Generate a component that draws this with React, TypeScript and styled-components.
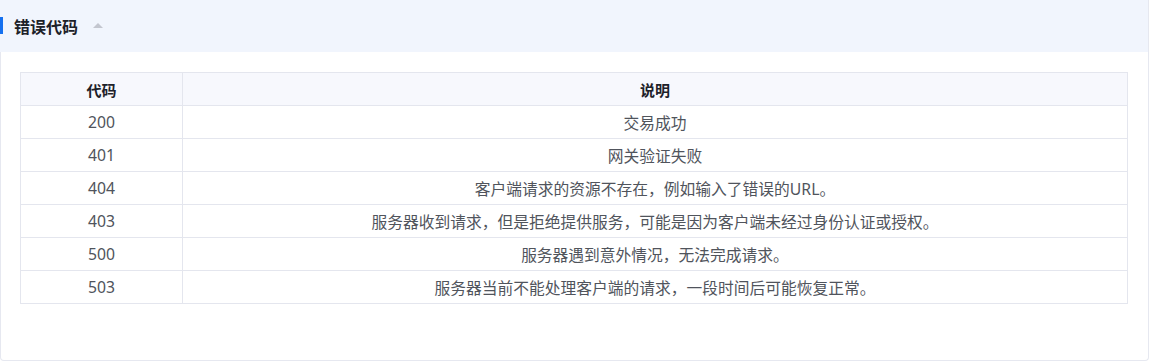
import styled, { createGlobalStyle } from "styled-components";

const GlobalStyle = createGlobalStyle`
  html, body {
    margin: 0;
    padding: 0;
    background: #ffffff;
  }
  body {
    font-family: "Noto Sans", "Noto Sans CJK SC", sans-serif;
  }
`;

const Card = styled.div`
  width: 1149px;
  height: 361px;
  box-sizing: border-box;
  border: 1px solid #e6e8f0;
  border-top: none;
  border-radius: 0 0 4px 4px;
`;

const Header = styled.div`
  height: 52px;
  margin-left: -1px;
  display: flex;
  align-items: center;
  background-color: #f1f5fd;
  position: relative;
  padding-left: 14px;
  gap: 15px;
`;

const Marker = styled.span`
  position: absolute;
  left: 0;
  top: 17px;
  width: 3px;
  height: 17px;
  background-color: #1570ef;
`;

const Title = styled.span`
  font-size: 16px;
  font-weight: 700;
  color: #1d2129;
  font-family: "Noto Sans CJK SC", sans-serif;
`;

const Caret = styled.span`
  width: 0;
  height: 0;
  border-left: 5px solid transparent;
  border-right: 5px solid transparent;
  border-bottom: 5px solid #c3c6cf;
  margin-top: -2px;
`;

const Body = styled.div`
  padding: 20px 20px 0 19px;
`;

const Table = styled.table`
  width: 1108px;
  border-collapse: collapse;
  table-layout: fixed;
  font-family: "Noto Sans", "Noto Sans CJK SC", sans-serif;
`;

const Th = styled.th<{ $width?: number }>`
  width: ${(p) => (p.$width ? `${p.$width}px` : "auto")};
  height: 32px;
  padding: 0;
  border: 1px solid #e4e6ee;
  background-color: #f7f8fd;
  color: #1d2129;
  font-size: 15px;
  font-weight: 700;
  text-align: center;
`;

const Td = styled.td`
  height: 32px;
  padding: 0;
  border: 1px solid #e4e6ee;
  color: #50545c;
  font-size: 15.75px;
  text-align: center;
`;

const rows = [
  { code: "200", desc: "交易成功" },
  { code: "401", desc: "网关验证失败" },
  { code: "404", desc: "客户端请求的资源不存在，例如输入了错误的URL。" },
  { code: "403", desc: "服务器收到请求，但是拒绝提供服务，可能是因为客户端未经过身份认证或授权。" },
  { code: "500", desc: "服务器遇到意外情况，无法完成请求。" },
  { code: "503", desc: "服务器当前不能处理客户端的请求，一段时间后可能恢复正常。" },
];

export default function App() {
  return (
    <>
      <GlobalStyle />
      <Card>
        <Header>
          <Marker />
          <Title>错误代码</Title>
          <Caret />
        </Header>
        <Body>
          <Table>
            <thead>
              <tr>
                <Th $width={161}>代码</Th>
                <Th>说明</Th>
              </tr>
            </thead>
            <tbody>
              {rows.map((r) => (
                <tr key={r.code}>
                  <Td>{r.code}</Td>
                  <Td>{r.desc}</Td>
                </tr>
              ))}
            </tbody>
          </Table>
        </Body>
      </Card>
    </>
  );
}
